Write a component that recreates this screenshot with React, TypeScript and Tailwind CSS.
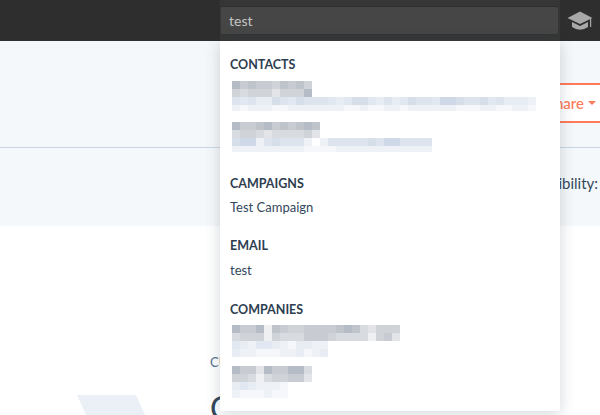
const gray = ['#ffffff', '#eef0f2', '#e2e4e7', '#d8dbdf', '#d0d3d8', '#c8ccd2', '#bfc4cb', '#b5bcc5'];
const blue = ['#ffffff', '#f5f7fa', '#eef2f7', '#e8edf4', '#e2e8f1', '#dde4ee', '#d6deea', '#cfd8e6'];

// each row is a string of shade levels, one digit per 8px cell
function Mosaic({ rows }: { rows: { ramp: string[]; cells: string; h: number }[] }) {
  return (
    <div className="ml-[12px] flex flex-col blur-[0.6px]">
      {rows.map((row, i) => (
        <div key={i} className="flex">
          {row.cells.split('').map((c, j) => (
            <div key={j} className="w-[8px]" style={{ height: row.h, background: row.ramp[Number(c)] }} />
          ))}
        </div>
      ))}
    </div>
  );
}

function Heading({ children, className }: { children: string; className: string }) {
  return <h3 className={`pl-[10px] text-[12.5px] font-bold leading-[16px] text-[#2d3e50] ${className}`}>{children}</h3>;
}

function Row({ children, className }: { children: string; className: string }) {
  return <div className={`pl-[10px] text-[13px] leading-[18px] text-[#33475b] ${className}`}>{children}</div>;
}

export default function App() {
  return (
    <div className="relative h-[415px] w-[600px] overflow-hidden bg-white font-['Lato','Liberation_Sans',sans-serif]">
      <header className="flex h-[41px] bg-[#2e2e2e] pl-[220px]">
        <div className="h-full w-[340px] bg-[#363636] px-[1px] pt-[6px]">
          <input
            readOnly
            value="test"
            className="h-[29px] w-[337px] rounded-[2px] border-y border-t-[#2f2f2f] border-b-[#333333] bg-[#464646] pl-[8px] text-[14px] text-[#c4c4c4] outline-none"
          />
        </div>
        <div className="flex flex-1 items-center pl-[7px]">
          <svg width="26" height="20" viewBox="0 0 26 20" fill="#a8a8a8">
            <path d="M13 0.5 L25.5 7 L13 13 L0.5 7 Z" />
            <path d="M5 11 L13 15 L21 11 L21 16 Q13 21.5 5 16 Z" />
            <rect x="23" y="8" width="1.2" height="8" />
          </svg>
        </div>
      </header>

      <section className="flex h-[107px] items-end justify-end border-b border-[#cbd6e2] bg-[#f5f8fa] pb-[24px]">
        <div className="-mr-[10px] flex h-[40px] items-center gap-[4px] rounded-[3px] border-2 border-[#ff7a59] bg-white pl-[12px] pr-[12px] text-[15px] font-medium text-[#ff7a59]">
          Share
          <span className="h-0 w-0 border-x-[4px] border-t-[4px] border-x-transparent border-t-[#ff7a59]" />
        </div>
      </section>

      <section className="flex h-[78px] justify-end bg-[#f5f8fa] pr-[2px] pt-[25px] text-[15px] leading-[20px] text-[#33475b]">
        Visibility:
      </section>

      <section className="flex h-[189px] pl-[77px]">
        <svg className="mt-[169px]" width="68" height="20" viewBox="0 0 68 20">
          <polygon points="0,0 59,0 68,20 9,20" fill="#eaf0f6" />
        </svg>
        <div className="ml-[65px] pt-[128px] text-[#33475b]">
          <div className="text-[13px] leading-[16px] text-[#516f90]">CU</div>
          <div className="mt-[18px] text-[32px] leading-[40px]">C</div>
        </div>
      </section>

      <div className="absolute left-[220px] top-[41px] h-[370px] w-[340px] bg-white shadow-[0_2px_14px_rgba(45,62,80,0.22)]">
        <Heading className="mt-[16px]">CONTACTS</Heading>
        <div className="mt-[8px]">
          <Mosaic
            rows={[
              { ramp: gray, cells: '7565546564', h: 8 },
              { ramp: gray, cells: '4344424447', h: 8 },
              { ramp: blue, cells: '54533654655543466435346554776556453332', h: 8 },
              { ramp: blue, cells: '21222112222222112112212222221112211221', h: 6 },
            ]}
          />
        </div>
        <div className="mt-[11px]">
          <Mosaic
            rows={[
              { ramp: gray, cells: '75567565676', h: 8 },
              { ramp: gray, cells: '34432333342', h: 8 },
              { ramp: blue, cells: '6772565552025555565775555', h: 8 },
              { ramp: blue, cells: '2222222221111222222222222', h: 6 },
            ]}
          />
        </div>
        <Heading className="mt-[24px]">CAMPAIGNS</Heading>
        <Row className="mt-[6px]">Test Campaign</Row>
        <Heading className="mt-[22px]">EMAIL</Heading>
        <Row className="mt-[7px]">test</Row>
        <Heading className="mt-[23px]">COMPANIES</Heading>
        <div className="mt-[7px]">
          <Mosaic
            rows={[
              { ramp: gray, cells: '755716544555567632444', h: 8 },
              { ramp: gray, cells: '344414333555433331452', h: 8 },
              { ramp: blue, cells: '432443213322', h: 8 },
              { ramp: blue, cells: '322111223123', h: 8 },
            ]}
          />
        </div>
        <div className="mt-[9px]">
          <Mosaic
            rows={[
              { ramp: gray, cells: '7552755773', h: 8 },
              { ramp: gray, cells: '4431344552', h: 8 },
              { ramp: blue, cells: '3432221', h: 8 },
              { ramp: blue, cells: '2111211', h: 8 },
            ]}
          />
        </div>
      </div>
    </div>
  );
}
